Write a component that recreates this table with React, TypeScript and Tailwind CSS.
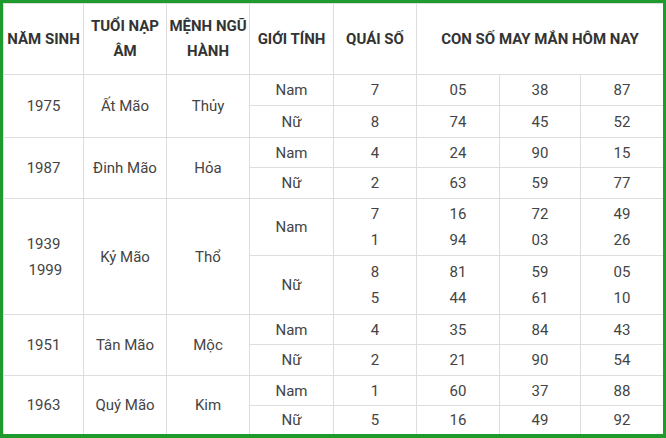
import React from 'react';

type Gender = { label: string; quai: string[]; nums: string[][] };
type Row = { years: string[]; napAm: string; menh: string; h: [number, number]; genders: [Gender, Gender] };

const ROWS: Row[] = [
  {
    years: ['1975'],
    napAm: 'Ất Mão',
    menh: 'Thủy',
    h: [31, 32],
    genders: [
      { label: 'Nam', quai: ['7'], nums: [['05', '38', '87']] },
      { label: 'Nữ', quai: ['8'], nums: [['74', '45', '52']] },
    ],
  },
  {
    years: ['1987'],
    napAm: 'Đinh Mão',
    menh: 'Hỏa',
    h: [30, 31],
    genders: [
      { label: 'Nam', quai: ['4'], nums: [['24', '90', '15']] },
      { label: 'Nữ', quai: ['2'], nums: [['63', '59', '77']] },
    ],
  },
  {
    years: ['1939', '\u00a01999'],
    napAm: 'Kỷ Mão',
    menh: 'Thổ',
    h: [57, 59],
    genders: [
      { label: 'Nam', quai: ['7', '1'], nums: [['16', '72', '49'], ['94', '03', '26']] },
      { label: 'Nữ', quai: ['8', '5'], nums: [['81', '59', '05'], ['44', '61', '10']] },
    ],
  },
  {
    years: ['1951'],
    napAm: 'Tân Mão',
    menh: 'Mộc',
    h: [30, 31],
    genders: [
      { label: 'Nam', quai: ['4'], nums: [['35', '84', '43']] },
      { label: 'Nữ', quai: ['2'], nums: [['21', '90', '54']] },
    ],
  },
  {
    years: ['1963'],
    napAm: 'Quý Mão',
    menh: 'Kim',
    h: [30, 29],
    genders: [
      { label: 'Nam', quai: ['1'], nums: [['60', '37', '88']] },
      { label: 'Nữ', quai: ['5'], nums: [['16', '49', '92']] },
    ],
  },
];

const td = 'border border-[#dedede] text-center align-middle p-0 leading-[26px]';
const th = 'border border-[#dedede] text-center align-middle p-0 font-bold leading-[25px] text-[#333]';

// one or more stacked values in a cell
const Lines = ({ items }: { items: string[] }) => (
  <>
    {items.map((s, i) => (
      <div key={i}>{s}</div>
    ))}
  </>
);

export default function App() {
  return (
    <div
      className="w-[666px] h-[438px] bg-white border-t-[3px] border-x-[3px] border-b-[4px] border-[#1f9a2f] overflow-hidden"
      style={{ fontFamily: 'Roboto, "Noto Sans", sans-serif' }}
    >
      <table className="table-fixed border-collapse w-[660px] text-[15px] text-[#444]">
        <colgroup>
          <col className="w-[80px]" />
          <col className="w-[83px]" />
          <col className="w-[83px]" />
          <col className="w-[84px]" />
          <col className="w-[83px]" />
          <col className="w-[83px]" />
          <col className="w-[81px]" />
          <col className="w-[83px]" />
        </colgroup>
        <thead>
          <tr className="h-[71px]">
            <th className={th}>NĂM SINH</th>
            <th className={th}>
              TUỔI NẠP
              <br />
              ÂM
            </th>
            <th className={th}>
              MỆNH NGŨ
              <br />
              HÀNH
            </th>
            <th className={th}>GIỚI TÍNH</th>
            <th className={th}>QUÁI SỐ</th>
            <th className={th} colSpan={3}>
              CON SỐ MAY MẮN HÔM NAY
            </th>
          </tr>
        </thead>
        <tbody>
          {ROWS.map((row) =>
            row.genders.map((g, gi) => (
              <tr key={row.napAm + g.label} style={{ height: row.h[gi] }}>
                {gi === 0 && (
                  <>
                    <td className={td} rowSpan={2}>
                      <Lines items={row.years} />
                    </td>
                    <td className={td} rowSpan={2}>
                      {row.napAm}
                    </td>
                    <td className={td} rowSpan={2}>
                      {row.menh}
                    </td>
                  </>
                )}
                <td className={td}>{g.label}</td>
                <td className={td}>
                  <Lines items={g.quai} />
                </td>
                {[0, 1, 2].map((c) => (
                  <td key={c} className={td}>
                    <Lines items={g.nums.map((n) => n[c])} />
                  </td>
                ))}
              </tr>
            )),
          )}
        </tbody>
      </table>
    </div>
  );
}
